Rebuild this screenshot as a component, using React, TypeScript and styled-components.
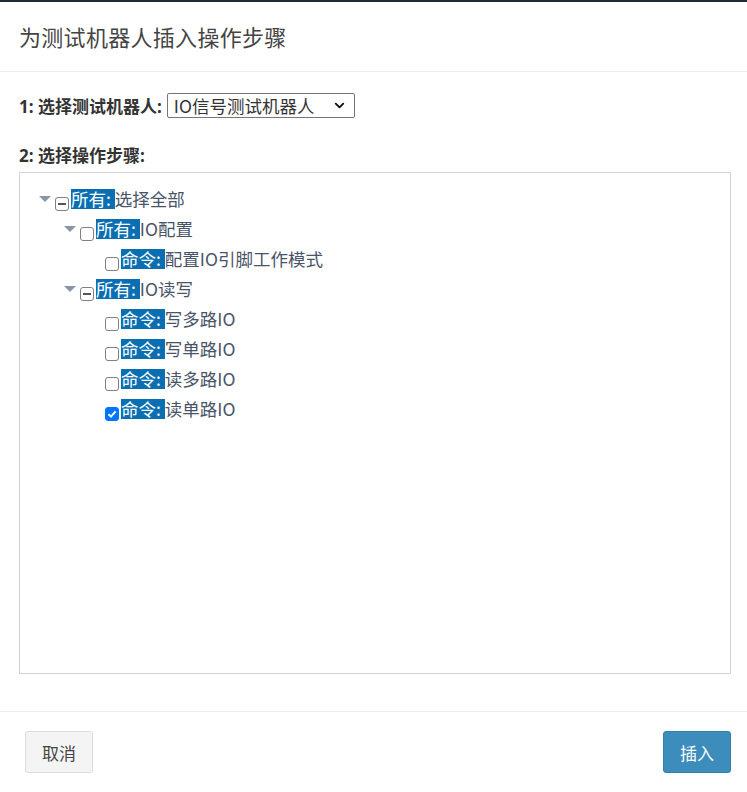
import React from "react";
import styled, { createGlobalStyle } from "styled-components";
import { ChevronDown } from "lucide-react";

const GlobalStyle = createGlobalStyle`
  *, *::before, *::after {
    box-sizing: border-box;
  }
  html, body {
    margin: 0;
    padding: 0;
    background: #ffffff;
  }
  body {
    font-family: "Open Sans", "Noto Sans CJK SC", sans-serif;
    color: #333333;
  }
`;

const Modal = styled.div`
  width: 747px;
  height: 792px;
  display: flex;
  flex-direction: column;
  border-top: 2px solid #1e2c39;
  background: #ffffff;
`;

const Header = styled.div`
  height: 70px;
  flex: none;
  display: flex;
  align-items: center;
  padding: 0 19px 2px;
  border-bottom: 1px solid #ececec;
`;

const Title = styled.h4`
  margin: 0;
  font-family: "Noto Sans CJK SC", sans-serif;
  font-weight: 400;
  font-size: 22px;
  color: #444444;
  letter-spacing: 0.3px;
`;

const Body = styled.div`
  flex: 1;
  display: flex;
  flex-direction: column;
  padding: 20px 16px 37px 19px;
`;

const FieldRow = styled.div`
  display: flex;
  align-items: center;
  gap: 5px;
  height: 26px;
`;

const FieldLabel = styled.label`
  font-family: "Open Sans", "Noto Sans CJK SC", sans-serif;
  font-weight: 700;
  font-size: 17px;
  color: #333333;
`;

const SelectWrap = styled.div`
  position: relative;
  width: 188px;
  height: 25px;
`;

const Select = styled.select`
  appearance: none;
  width: 100%;
  height: 100%;
  font-family: "Noto Sans CJK SC", sans-serif;
  font-size: 17.5px;
  line-height: 23px;
  color: #333333;
  border: 1px solid #767676;
  border-radius: 2px;
  background: #ffffff;
  padding: 0 24px 0 6px;
`;

const SelectChevron = styled(ChevronDown)`
  position: absolute;
  right: 8px;
  top: 5px;
  pointer-events: none;
  color: #111111;
`;

const StepLabel = styled(FieldLabel)`
  margin-top: 25px;
  display: block;
  line-height: 26px;
`;

const TreeBox = styled.div`
  margin-top: 3px;
  flex: 1;
  border: 1px solid #d2d2d2;
  padding: 11px 0;
`;

const TreeList = styled.ul<{ $indent: number }>`
  list-style: none;
  margin: 0;
  padding: 0 0 0 ${(p) => p.$indent}px;
`;

const Row = styled.div`
  display: flex;
  align-items: flex-end;
  height: 30px;
  font-family: "Noto Sans CJK SC", sans-serif;
  font-size: 17.5px;
  color: #4a5468;
`;

const Arrow = styled.span<{ $show: boolean }>`
  width: 16px;
  flex: none;
  align-self: flex-start;
  margin-top: 12px;
  height: 6px;
  &::after {
    content: "";
    display: ${(p) => (p.$show ? "block" : "none")};
    width: 0;
    height: 0;
    border-left: 6px solid transparent;
    border-right: 6px solid transparent;
    border-top: 6px solid #8796a8;
  }
`;

const Box = styled.span<{ $state: "on" | "off" | "mixed" }>`
  width: 14px;
  height: 14px;
  flex: none;
  margin: 0 2px 3px 0;
  border-radius: 3px;
  border: 1px solid ${(p) => (p.$state === "on" ? "#0075ff" : "#808080")};
  background: ${(p) => (p.$state === "on" ? "#0075ff" : "#ffffff")};
  display: flex;
  align-items: center;
  justify-content: center;
`;

const Dash = styled.span`
  width: 8px;
  height: 2px;
  background: #555555;
`;

const Tag = styled.span`
  background: #0a6fb2;
  color: #ffffff;
  line-height: 20px;
  white-space: pre;
  margin-bottom: 5px;
`;

const Text = styled.span`
  line-height: 20px;
  margin-bottom: 5px;
`;

const Footer = styled.div`
  height: 81px;
  flex: none;
  border-top: 1px solid #efefef;
  display: flex;
  justify-content: space-between;
  align-items: flex-start;
  padding: 19px 16px 0 25px;
`;

const Button = styled.button<{ $primary?: boolean }>`
  height: 42px;
  padding: 0 16px;
  font-family: "Noto Sans CJK SC", sans-serif;
  font-size: 17px;
  border-radius: 3px;
  border: 1px solid ${(p) => (p.$primary ? "#367fa9" : "#dddddd")};
  background: ${(p) => (p.$primary ? "#3c8dbc" : "#f4f4f4")};
  color: ${(p) => (p.$primary ? "#ffffff" : "#444444")};
`;

type Node = {
  kind: "所有" | "命令";
  text: string;
  state: "on" | "off" | "mixed";
  children?: Node[];
};

const tree: Node[] = [
  {
    kind: "所有",
    text: "选择全部",
    state: "mixed",
    children: [
      {
        kind: "所有",
        text: "IO配置",
        state: "off",
        children: [{ kind: "命令", text: "配置IO引脚工作模式", state: "off" }],
      },
      {
        kind: "所有",
        text: "IO读写",
        state: "mixed",
        children: [
          { kind: "命令", text: "写多路IO", state: "off" },
          { kind: "命令", text: "写单路IO", state: "off" },
          { kind: "命令", text: "读多路IO", state: "off" },
          { kind: "命令", text: "读单路IO", state: "on" },
        ],
      },
    ],
  },
];

const TreeCheck = ({ state }: { state: Node["state"] }) => (
  <Box $state={state} role="checkbox" aria-checked={state === "mixed" ? "mixed" : state === "on"}>
    {state === "mixed" && <Dash />}
    {state === "on" && (
      <svg width="10" height="10" viewBox="0 0 10 10">
        <path d="M1.5 5.2 L4 7.6 L8.6 2.4" fill="none" stroke="#ffffff" strokeWidth="2" />
      </svg>
    )}
  </Box>
);

const TreeItem = ({ node }: { node: Node }) => (
  <li>
    <Row>
      <Arrow $show={!!node.children} />
      <TreeCheck state={node.state} />
      <Tag>{node.kind}: </Tag>
      <Text>{node.text}</Text>
    </Row>
    {node.children && (
      <TreeList $indent={25}>
        {node.children.map((c, i) => (
          <TreeItem key={i} node={c} />
        ))}
      </TreeList>
    )}
  </li>
);

export default function App() {
  return (
    <>
      <GlobalStyle />
      <Modal>
        <Header>
          <Title>为测试机器人插入操作步骤</Title>
        </Header>
        <Body>
          <FieldRow>
            <FieldLabel>1: 选择测试机器人:</FieldLabel>
            <SelectWrap>
              <Select defaultValue="io">
                <option value="io">IO信号测试机器人</option>
              </Select>
              <SelectChevron size={15} strokeWidth={3} />
            </SelectWrap>
          </FieldRow>
          <StepLabel>2: 选择操作步骤:</StepLabel>
          <TreeBox>
            <TreeList $indent={19}>
              {tree.map((n, i) => (
                <TreeItem key={i} node={n} />
              ))}
            </TreeList>
          </TreeBox>
        </Body>
        <Footer>
          <Button>取消</Button>
          <Button $primary>插入</Button>
        </Footer>
      </Modal>
    </>
  );
}
